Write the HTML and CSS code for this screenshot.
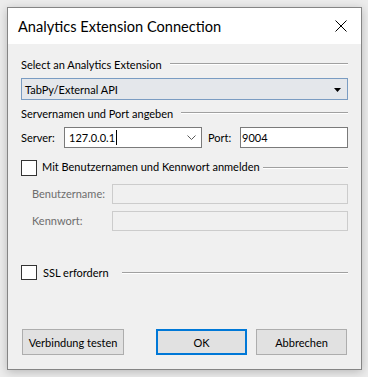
FILE: index.html
```html
<!DOCTYPE html>
<html lang="de">
<head>
  <meta charset="UTF-8">
  <title>Analytics Extension Connection</title>
  <link rel="stylesheet" href="styles.css">
</head>
<body>
  <div class="window">
    <div class="titlebar">
      <span class="title">Analytics Extension Connection</span>
      <svg class="close" width="12" height="12" viewBox="0 0 12 12">
        <path d="M0.5 0.5 L11.5 11.5 M11.5 0.5 L0.5 11.5" stroke="#000" stroke-width="1" fill="none"/>
      </svg>
    </div>

    <div class="content">
      <!-- Extension -->
      <div class="group-head">
        <span>Select an Analytics Extension</span>
        <span class="rule"></span>
      </div>
      <div class="combo">
        <span>TabPy/External API</span>
        <svg class="combo-arrow" width="7" height="4" viewBox="0 0 7 4">
          <polygon points="0,0 7,0 3.5,4" fill="#000"/>
        </svg>
      </div>

      <!-- Server -->
      <div class="group-head head-server">
        <span>Servernamen und Port angeben</span>
        <span class="rule"></span>
      </div>
      <div class="server-row">
        <span class="lbl lbl-server">Server:</span>
        <div class="input input-server">
          <span>127.0.0.1</span><span class="caret"></span>
          <svg class="chevron" width="9" height="5" viewBox="0 0 9 5">
            <polyline points="0.5,0.5 4.5,4.5 8.5,0.5" stroke="#5a5a5a" stroke-width="1" fill="none"/>
          </svg>
        </div>
        <span class="lbl lbl-port">Port:</span>
        <div class="input input-port">9004</div>
      </div>

      <!-- Anmeldung -->
      <div class="check-row check-login">
        <span class="box"></span>
        <span class="check-label">Mit Benutzernamen und Kennwort anmelden</span>
        <span class="rule"></span>
      </div>
      <div class="field-row">
        <span class="lbl-off">Benutzername:</span>
        <div class="input off"></div>
      </div>
      <div class="field-row field-pw">
        <span class="lbl-off">Kennwort:</span>
        <div class="input off"></div>
      </div>

      <!-- SSL -->
      <div class="check-row check-ssl">
        <span class="box"></span>
        <span class="check-label">SSL erfordern</span>
        <span class="rule"></span>
      </div>

      <div class="buttons">
        <button class="btn btn-test">Verbindung testen</button>
        <button class="btn btn-ok">OK</button>
        <button class="btn btn-cancel">Abbrechen</button>
      </div>
    </div>
  </div>
</body>
</html>
```

FILE: styles.css
```css
html, body {
  margin: 0;
  padding: 0;
  background-color: #ececec;
  height: 100%;
  overflow: hidden;
  font-family: 'Lato', 'Liberation Sans', sans-serif;
  font-size: 11px;
  color: #000;
}
.window {
  margin: 7px 0 0 7px;
  width: 353px;
  height: 361px;
  border: 1px solid #858585;
  background: #f0f0f0;
  box-shadow: 0 2px 9px rgba(0, 0, 0, 0.22);
  display: flex;
  flex-direction: column;
}
.titlebar {
  height: 36px;
  background: #fff;
  display: flex;
  align-items: center;
  justify-content: space-between;
  padding: 0 14px 0 10px;
}
.title {
  font-size: 14.6px;
}
.close {
  display: block;
}
.content {
  padding: 12px 13px 13px 13px;
  display: flex;
  flex-direction: column;
}
.group-head {
  height: 16px;
  line-height: 16px;
  display: flex;
  align-items: center;
  white-space: nowrap;
}
.group-head span:first-child {
  padding-top: 1px;
}
.rule {
  flex: 1;
  height: 0;
  border-top: 1px solid #a0a0a0;
  border-bottom: 1px solid #fff;
  margin-left: 8px;
}
.combo {
  margin-top: 6px;
  height: 20px;
  border: 1px solid #7a9cc2;
  background: #e4e7eb;
  display: flex;
  align-items: center;
  justify-content: space-between;
  padding: 0 6px 0 3px;
}
.combo-arrow {
  display: block;
  margin-top: 1px;
}
.head-server {
  margin-top: 5px;
}
.server-row {
  margin-top: 6px;
  height: 21px;
  display: flex;
  align-items: center;
}
.lbl {
  line-height: 16px;
}
.lbl-server {
  width: 43px;
}
.lbl-port {
  width: 32px;
}
.input {
  box-sizing: border-box;
  height: 100%;
  border: 1px solid #7a7a7a;
  background: #fff;
  display: flex;
  align-items: center;
}
.input-server {
  width: 138px;
  margin-right: 6px;
  padding: 0 5px 0 4px;
}
.caret {
  width: 1px;
  height: 15px;
  background: #000;
  margin-left: 1px;
}
.chevron {
  display: block;
  margin-left: auto;
}
.input-port {
  flex: 1;
  padding-left: 1px;
}
.check-row {
  height: 16px;
  display: flex;
  align-items: center;
  white-space: nowrap;
}
.check-login {
  margin-top: 12px;
}
.check-login .check-label {
  margin-top: -2px;
}
.check-login .rule {
  margin-left: 3px;
}
.box {
  box-sizing: border-box;
  width: 16px;
  height: 16px;
  border: 1px solid #333;
  background: #fff;
}
.check-label {
  margin-left: 5px;
  line-height: 16px;
}
.check-ssl {
  margin-top: 34px;
  height: 15px;
}
.check-ssl .box {
  height: 15px;
}
.check-ssl .check-label {
  margin-left: 6px;
}
.check-ssl .rule {
  margin-left: 13px;
}
.field-row {
  margin-top: 8px;
  height: 20px;
  display: flex;
  align-items: center;
  padding-left: 11px;
}
.field-pw {
  margin-top: 7px;
}
.lbl-off {
  width: 80px;
  color: #6d6d6d;
  line-height: 16px;
  white-space: nowrap;
}
.input.off {
  flex: 1;
  border-color: #cccccc;
  background: #f0f0f0;
}
.buttons {
  margin-top: 49px;
  height: 26px;
  display: flex;
  padding-left: 1px;
}
.btn {
  box-sizing: border-box;
  height: 26px;
  font-family: inherit;
  font-size: 11px;
  color: #000;
  background: #e1e1e1;
  border: 1px solid #adadad;
  padding: 0;
  border-radius: 0;
  white-space: nowrap;
}
.btn-test {
  width: 102px;
}
.btn-ok {
  width: 91px;
  margin-left: 32px;
  border: 2px solid #0078d7;
}
.btn-cancel {
  width: 91px;
  margin-left: 9px;
}
```
